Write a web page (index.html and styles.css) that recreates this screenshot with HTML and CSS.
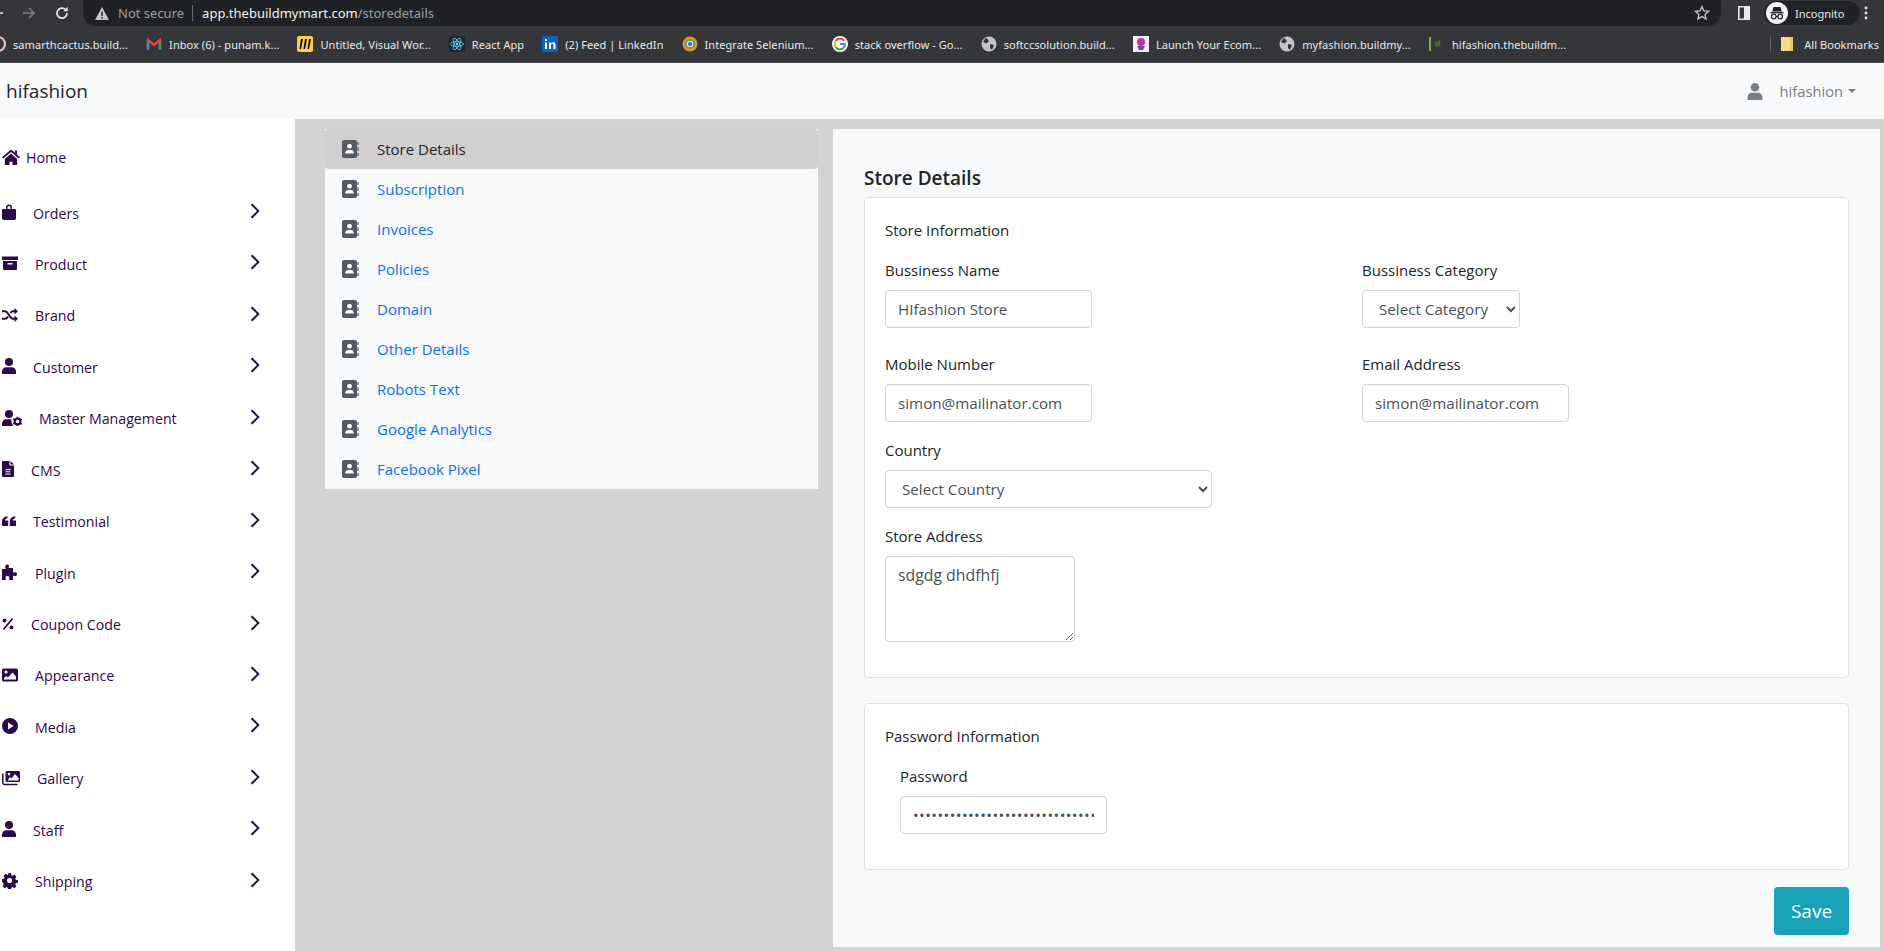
FILE: index.html
```html
<!DOCTYPE html>
<html lang="en">
<head>
  <meta charset="UTF-8" />
  <title>Store Details</title>
  <link rel="stylesheet" href="styles.css">
</head>
<body>
  <svg class="icon-defs" width="0" height="0">
    <symbol id="i-book" viewBox="0 0 17 18">
      <path d="M2 0h11a2 2 0 0 1 2 2v14a2 2 0 0 1-2 2H2a2 2 0 0 1-2-2V2a2 2 0 0 1 2-2z" fill="currentColor"/>
      <circle cx="7.500" cy="6.200" r="2.400" fill="#fff"/>
      <path d="M3.200 13.500c0-2.400 1.400-3.600 2.600-3.600h3.400c1.200 0 2.600 1.200 2.600 3.600z" fill="#fff"/>
      <path d="M16 2v3M16 7v4M16 13v3" stroke="currentColor" stroke-width="1.200"/>
    </symbol>
    <symbol id="i-chev" viewBox="0 0 10 16">
      <path d="M1.500 1.200 8.300 8l-6.800 6.800" fill="none" stroke="currentColor" stroke-width="2"/>
    </symbol>
    <symbol id="i-user" viewBox="0 0 14 16">
      <circle cx="7" cy="4" r="4" fill="currentColor"/>
      <path d="M0 16v-2.200C0 11 2 9.200 4.200 9.200h5.600C12 9.200 14 11 14 13.800V16z" fill="currentColor"/>
    </symbol>
    <symbol id="i-globe" viewBox="0 0 16 16">
      <circle cx="8" cy="8" r="7.500" fill="#c4c7c5"/>
      <path d="M5 1.500 8 5 5.500 7.500 2 6zM9 8l4 1-2 5-2-2z" fill="#35363a"/>
    </symbol>
  </svg>

  <!-- browser toolbar -->
  <header class="browser">
    <div class="tabbar">
      <svg class="nav-arrow back" viewBox="0 0 14 14"><path d="M13 7H2M7 2 2 7l5 5" fill="none" stroke="#e8eaed" stroke-width="1.600"/></svg>
      <svg class="nav-arrow fwd" viewBox="0 0 14 14"><path d="M1 7h11M7 2l5 5-5 5" fill="none" stroke="#7d7f83" stroke-width="1.600"/></svg>
      <svg class="nav-arrow reload" viewBox="0 0 14 14"><path d="M12 7a5 5 0 1 1-1.500-3.500" fill="none" stroke="#e8eaed" stroke-width="1.700"/><path d="M12.800 0.800v4.400H8.400z" fill="#e8eaed"/></svg>
      <div class="urlbar">
        <svg class="warn" viewBox="0 0 14 13"><path d="M7 0l7 13H0z" fill="#c4c7c5"/><path d="M6.300 4.500h1.400v4.500H6.300zM6.300 10h1.400v1.400H6.300z" fill="#202124"/></svg>
        <span class="not-secure">Not secure</span>
        <span class="url-sep"></span>
        <span class="url-host">app.thebuildmymart.com</span><span class="url-path">/storedetails</span>
        <svg class="star" viewBox="0 0 16 16"><path d="M8 1.500l1.900 4.400 4.700.4-3.600 3.100 1.100 4.600L8 11.600 3.900 14l1.100-4.600L1.400 6.300l4.700-.4z" fill="none" stroke="#c4c7c5" stroke-width="1.300"/></svg>
      </div>
      <svg class="sidepanel" viewBox="0 0 12 14"><path d="M.8.800h10.400v12.400H.8z" fill="none" stroke="#e8eaed" stroke-width="1.600"/><path d="M6 1h5v12H6z" fill="#e8eaed"/></svg>
      <div class="incognito">
        <svg class="spy" viewBox="0 0 22 22"><circle cx="11" cy="11" r="11" fill="#f1f3f4"/><path d="M7.500 5h7l1.300 4.500H6.200zM4.500 10h13v1.200h-13z" fill="#202124"/><circle cx="7.800" cy="14.500" r="2.300" fill="none" stroke="#202124" stroke-width="1.200"/><circle cx="14.200" cy="14.500" r="2.300" fill="none" stroke="#202124" stroke-width="1.200"/><path d="M10 14.500h2" stroke="#202124"/></svg>
        <span>Incognito</span>
      </div>
      <svg class="kebab" viewBox="0 0 4 14"><circle cx="2" cy="2" r="1.400" fill="#e8eaed"/><circle cx="2" cy="7" r="1.400" fill="#e8eaed"/><circle cx="2" cy="12" r="1.400" fill="#e8eaed"/></svg>
    </div>
    <div class="bookmarks">
      <a class="bm bm-first"><svg class="bm-icon" viewBox="0 0 16 16"><circle cx="8" cy="8" r="7" fill="none" stroke="#e9c9b5" stroke-width="2"/></svg><span>samarthcactus.build...</span></a>
      <a class="bm"><svg class="bm-icon" viewBox="0 0 16 16"><path d="M2 13.500V4l6 5 6-5v9.500" fill="none" stroke="#ea4335" stroke-width="2.400"/><path d="M2 13.500V5" stroke="#4285f4" stroke-width="2.400"/><path d="M14 13.500V5" stroke="#34a853" stroke-width="2.400"/></svg><span>Inbox (6) - punam.k...</span></a>
      <a class="bm"><svg class="bm-icon" viewBox="0 0 16 16"><rect width="16" height="16" rx="2" fill="#ffd02f"/><path d="M4 3h2L4 13H2.500zM8 3h2L8 13H6.500zM12 3h2l-2 10h-1.500z" fill="#050038"/></svg><span>Untitled, Visual Wor...</span></a>
      <a class="bm"><svg class="bm-icon" viewBox="0 0 16 16"><rect width="16" height="16" rx="2" fill="#20232a"/><g fill="none" stroke="#61dafb" stroke-width=".8"><ellipse cx="8" cy="8" rx="6.500" ry="2.500"/><ellipse cx="8" cy="8" rx="6.500" ry="2.500" transform="rotate(60 8 8)"/><ellipse cx="8" cy="8" rx="6.500" ry="2.500" transform="rotate(120 8 8)"/></g><circle cx="8" cy="8" r="1.300" fill="#61dafb"/></svg><span>React App</span></a>
      <a class="bm"><svg class="bm-icon" viewBox="0 0 16 16"><rect width="16" height="16" rx="2" fill="#0a66c2"/><path d="M3 6.500h2V13H3zM3 3h2v2H3zM7 6.500h2v1c.5-.8 1.300-1.200 2.200-1.200 1.500 0 2.300 1 2.300 2.700v4h-2V9.500c0-.9-.3-1.400-1.100-1.400S9 8.700 9 9.600V13H7z" fill="#fff"/></svg><span>(2) Feed | LinkedIn</span></a>
      <a class="bm"><svg class="bm-icon" viewBox="0 0 16 16"><circle cx="8" cy="8" r="7.500" fill="#e8912d"/><circle cx="8" cy="8" r="5" fill="#5fa04e"/><circle cx="8" cy="8" r="3.300" fill="#cfe3f7"/><circle cx="8" cy="8" r="2" fill="#2a6fbd"/></svg><span>Integrate Selenium...</span></a>
      <a class="bm"><svg class="bm-icon" viewBox="0 0 16 16"><circle cx="8" cy="8" r="8" fill="#fff"/><path d="M12.300 5a5 5 0 0 0-8.700 0" fill="none" stroke="#ea4335" stroke-width="2"/><path d="M3.600 5a5 5 0 0 0 0 6" fill="none" stroke="#fbbc05" stroke-width="2"/><path d="M3.600 11a5 5 0 0 0 7.800 1" fill="none" stroke="#34a853" stroke-width="2"/><path d="M8 8h5c0 1.800-.6 3.100-1.600 4" fill="none" stroke="#4285f4" stroke-width="2"/></svg><span>stack overflow - Go...</span></a>
      <a class="bm"><svg class="bm-icon"><use href="#i-globe"/></svg><span>softccsolution.build...</span></a>
      <a class="bm"><svg class="bm-icon" viewBox="0 0 16 16"><rect width="16" height="16" fill="#f3eef5"/><circle cx="8" cy="6" r="4" fill="#b8359a"/><path d="M4 10h8l-2 4H6z" fill="#7b3fa0"/></svg><span>Launch Your Ecom...</span></a>
      <a class="bm"><svg class="bm-icon"><use href="#i-globe"/></svg><span>myfashion.buildmy...</span></a>
      <a class="bm"><svg class="bm-icon" viewBox="0 0 16 16"><path d="M1 1v14" stroke="#9ed04c" stroke-width="1.500"/><path d="M6 5l1 6 1-5 1 5 1-7 1 6" fill="none" stroke="#4b6b35" stroke-width="1.200"/></svg><span>hifashion.thebuildm...</span></a>
      <div class="bm-all">
        <svg class="bm-icon folder" viewBox="0 0 12 16"><path d="M0 1h12v14H0z" fill="#f7dc8a"/><path d="M9 1h3v14H9z" fill="#e9c95e"/></svg>
        <span>All Bookmarks</span>
      </div>
    </div>
  </header>

  <nav class="topnav">
    <span class="brand">hifashion</span>
    <div class="user-menu">
      <svg class="user-icon"><use href="#i-user"/></svg>
      <span>hifashion</span>
      <i class="caret"></i>
    </div>
  </nav>

  <div class="layout">
    <aside class="sidebar">
      <a class="side-home">
        <svg class="side-icon w18" viewBox="0 0 18 16"><path d="M9 0.500 0 8.200l1.200 1.300L9 3l7.800 6.500L18 8.200l-3-2.600V1.500h-2.200v2.200zM2.800 9.900 9 4.400l6.200 5.500V16h-4.700v-3.200H7.500V16H2.800z" fill="currentColor"/></svg>
        <span>Home</span>
      </a>
      <a class="side-row">
        <svg class="side-icon w14" viewBox="0 0 14 16"><path d="M4 5V3.500a3 3 0 0 1 6 0V5h3a1 1 0 0 1 1 1v8a2 2 0 0 1-2 2H2a2 2 0 0 1-2-2V6a1 1 0 0 1 1-1zm1.500 0h3V3.500a1.500 1.500 0 0 0-3 0z" fill="currentColor"/></svg>
        <span class="side-label">Orders</span><svg class="chev"><use href="#i-chev"/></svg>
      </a>
      <a class="side-row">
        <svg class="side-icon w16" viewBox="0 0 16 16"><path d="M0 1.500h16v3.500H0zM1 6h14v8a1 1 0 0 1-1 1H2a1 1 0 0 1-1-1zm4.500 2v1.500h5V8z" fill="currentColor"/></svg>
        <span class="side-label">Product</span><svg class="chev"><use href="#i-chev"/></svg>
      </a>
      <a class="side-row">
        <svg class="side-icon w16" viewBox="0 0 16 16"><path d="M0 4.200h3c3.500 0 4.500 7.600 8 7.600h2M0 11.800h3c1.300 0 2.200-1 3-2.200M8.400 6c.7-1 1.500-1.800 2.600-1.800h2" fill="none" stroke="currentColor" stroke-width="2"/><path d="M12.500 1 16 4.200l-3.500 3.200zM12.500 8.600 16 11.800 12.500 15z" fill="currentColor"/></svg>
        <span class="side-label">Brand</span><svg class="chev"><use href="#i-chev"/></svg>
      </a>
      <a class="side-row">
        <svg class="side-icon w14"><use href="#i-user"/></svg>
        <span class="side-label">Customer</span><svg class="chev"><use href="#i-chev"/></svg>
      </a>
      <a class="side-row">
        <svg class="side-icon w20" viewBox="0 0 20 16"><circle cx="7" cy="4" r="4" fill="currentColor"/><path d="M0 16v-2.200C0 11 2 9.200 4.200 9.200h5.300c-.5 2.400.3 4.800 1.900 6.800z" fill="currentColor"/><circle cx="15.500" cy="11.500" r="2.900" fill="none" stroke="currentColor" stroke-width="2.200"/><path d="M15.500 6.800v2M15.500 14.200v2M11.300 9l1.700 1M18 13l1.700 1M11.300 14l1.700-1M18 10l1.700-1" stroke="currentColor" stroke-width="1.700"/></svg>
        <span class="side-label">Master Management</span><svg class="chev"><use href="#i-chev"/></svg>
      </a>
      <a class="side-row">
        <svg class="side-icon w12" viewBox="0 0 12 16"><path d="M1 0h6.500v4.500H12V15a1 1 0 0 1-1 1H1a1 1 0 0 1-1-1V1a1 1 0 0 1 1-1zm2.500 8v1h5V8zm0 2.200v1h5v-1zm0 2.200v1h5v-1z" fill="currentColor" fill-rule="evenodd"/><path d="M8.500 0 12 3.500H8.500z" fill="currentColor"/></svg>
        <span class="side-label">CMS</span><svg class="chev"><use href="#i-chev"/></svg>
      </a>
      <a class="side-row">
        <svg class="side-icon w14" viewBox="0 0 14 16"><path d="M0 8.500C0 5.500 2 3.500 5.500 3.200v2C4 5.400 3 6.200 3 7.500h3.200V13H0zM7.800 8.500c0-3 2-5 5.500-5.300v2c-1.500.2-2.500 1-2.500 2.300H14V13H7.800z" fill="currentColor"/></svg>
        <span class="side-label">Testimonial</span><svg class="chev"><use href="#i-chev"/></svg>
      </a>
      <a class="side-row">
        <svg class="side-icon w16" viewBox="0 0 16 16"><path d="M5 0.500c1.800 0 2.500 1.300 1.800 2.600-.3.500-.2 1 .5 1H11v4c0 .7.500.8 1 .5 1.300-.7 3-.2 3 1.600s-1.700 2.300-3 1.600c-.5-.3-1-.2-1 .5V16H7.500c-.7 0-.8-.5-.5-1 .7-1.300.2-3-1.600-3s-2.300 1.700-1.600 3c.3.500.2 1-.5 1H0V5h3c.7 0 .8-.5.500-1C2.700 2.500 3.200 0.500 5 0.500z" fill="currentColor"/></svg>
        <span class="side-label">Plugin</span><svg class="chev"><use href="#i-chev"/></svg>
      </a>
      <a class="side-row">
        <svg class="side-icon w12" viewBox="0 0 12 16"><circle cx="2.500" cy="4.500" r="2" fill="currentColor"/><circle cx="9.500" cy="11.500" r="2" fill="currentColor"/><path d="M10.500 2.500 1.500 13.500" stroke="currentColor" stroke-width="1.800"/></svg>
        <span class="side-label">Coupon Code</span><svg class="chev"><use href="#i-chev"/></svg>
      </a>
      <a class="side-row">
        <svg class="side-icon w16" viewBox="0 0 16 16"><path d="M1.500 1.500h13A1.500 1.500 0 0 1 16 3v10a1.500 1.500 0 0 1-1.500 1.500h-13A1.500 1.500 0 0 1 0 13V3a1.500 1.500 0 0 1 1.500-1.500zM2 12.500h12V9.500L10.500 5.500 6 10.500 4.500 9 2 11zM4 3.500a1.500 1.500 0 1 0 0 3 1.500 1.500 0 0 0 0-3z" fill="currentColor" fill-rule="evenodd"/></svg>
        <span class="side-label">Appearance</span><svg class="chev"><use href="#i-chev"/></svg>
      </a>
      <a class="side-row">
        <svg class="side-icon w16" viewBox="0 0 16 16"><path d="M8 0a8 8 0 1 1 0 16A8 8 0 0 1 8 0zM6 4.500v7l5.500-3.500z" fill="currentColor" fill-rule="evenodd"/></svg>
        <span class="side-label">Media</span><svg class="chev"><use href="#i-chev"/></svg>
      </a>
      <a class="side-row">
        <svg class="side-icon w18" viewBox="0 0 18 16"><path d="M5 1h11.500A1.500 1.500 0 0 1 18 2.500v8a1.500 1.500 0 0 1-1.500 1.500H5a1.500 1.500 0 0 1-1.500-1.500v-8A1.500 1.500 0 0 1 5 1zm.500 9.500h11V8L13 4 9.500 8.500 8 7zM7 2.800a1.300 1.300 0 1 0 0 2.600 1.300 1.300 0 0 0 0-2.600z" fill="currentColor" fill-rule="evenodd"/><path d="M.8 3.500v9.200a1.800 1.800 0 0 0 1.800 1.800h12.900" fill="none" stroke="currentColor" stroke-width="1.500"/></svg>
        <span class="side-label">Gallery</span><svg class="chev"><use href="#i-chev"/></svg>
      </a>
      <a class="side-row">
        <svg class="side-icon w14"><use href="#i-user"/></svg>
        <span class="side-label">Staff</span><svg class="chev"><use href="#i-chev"/></svg>
      </a>
      <a class="side-row">
        <svg class="side-icon w16" viewBox="0 0 16 16"><path d="M6.500 0h3l.5 2.300 1.300.6 2-1.200 2 2.200-1.200 1.900.6 1.300 2.300.5v2.800l-2.300.5-.6 1.300 1.200 2-2 2-2-1.200-1.300.6-.5 2.300h-3l-.5-2.300-1.300-.6-2 1.200-2-2 1.200-2-.6-1.300L0 9.400V6.600l2.300-.5.600-1.300-1.200-2 2-2 2 1.200 1.300-.6zM8 5.300a2.700 2.700 0 1 0 0 5.400 2.700 2.700 0 0 0 0-5.400z" fill="currentColor" fill-rule="evenodd" transform="scale(.94)"/></svg>
        <span class="side-label">Shipping</span><svg class="chev"><use href="#i-chev"/></svg>
      </a>
    </aside>

    <div class="sublist">
      <a class="sub-item active"><svg class="sub-icon"><use href="#i-book"/></svg>Store Details</a>
      <a class="sub-item"><svg class="sub-icon"><use href="#i-book"/></svg>Subscription</a>
      <a class="sub-item"><svg class="sub-icon"><use href="#i-book"/></svg>Invoices</a>
      <a class="sub-item"><svg class="sub-icon"><use href="#i-book"/></svg>Policies</a>
      <a class="sub-item"><svg class="sub-icon"><use href="#i-book"/></svg>Domain</a>
      <a class="sub-item"><svg class="sub-icon"><use href="#i-book"/></svg>Other Details</a>
      <a class="sub-item"><svg class="sub-icon"><use href="#i-book"/></svg>Robots Text</a>
      <a class="sub-item"><svg class="sub-icon"><use href="#i-book"/></svg>Google Analytics</a>
      <a class="sub-item"><svg class="sub-icon"><use href="#i-book"/></svg>Facebook Pixel</a>
    </div>

    <main class="panel">
      <h1 class="panel-title">Store Details</h1>
      <section class="card">
        <h2 class="card-title">Store Information</h2>
        <div class="form-grid">
          <div class="field tall">
            <label>Bussiness Name</label>
            <input class="ctl" type="text" value="HIfashion Store" />
          </div>
          <div class="field tall">
            <label>Bussiness Category</label>
            <select class="ctl ctl-category"><option>Select Category</option></select>
          </div>
          <div class="field">
            <label>Mobile Number</label>
            <input class="ctl" type="text" value="simon@mailinator.com" />
          </div>
          <div class="field">
            <label>Email Address</label>
            <input class="ctl" type="text" value="simon@mailinator.com" />
          </div>
          <div class="field wide">
            <label>Country</label>
            <select class="ctl ctl-country"><option>Select Country</option></select>
          </div>
          <div class="field wide last">
            <label>Store Address</label>
            <textarea class="ctl ctl-area">sdgdg dhdfhfj</textarea>
          </div>
        </div>
      </section>
      <section class="card card-pass">
        <h2 class="card-title">Password Information</h2>
        <div class="field last indent">
          <label>Password</label>
          <input class="ctl ctl-pass" type="password" value="simon@mailinator.com1234567890" />
        </div>
      </section>
      <div class="actions">
        <button class="save-btn" type="button">Save</button>
      </div>
    </main>
  </div>
</body>
</html>
```

FILE: styles.css
```css
* {
  box-sizing: border-box;
}

html,
body {
  margin: 0;
  height: 951px;
  overflow: hidden;
}

body {
  font-family: "Open Sans", "Noto Sans", sans-serif;
  font-size: 15px;
  color: #212529;
  background: #d3d3d3;
}

.icon-defs {
  position: absolute;
}

/* browser toolbar */
.browser {
  height: 63px;
  background: #35363a;
  border-bottom: 1px solid #4a4b4e;
  overflow: hidden;
}

.tabbar {
  display: flex;
  align-items: center;
  height: 26px;
}

.nav-arrow {
  flex: none;
  width: 14px;
  height: 14px;
}

.nav-arrow.back {
  margin-left: -10px;
}

.nav-arrow.fwd {
  margin-left: 18px;
}

.nav-arrow.reload {
  margin-left: 19px;
}

.urlbar {
  display: flex;
  align-items: center;
  flex: none;
  width: 1638px;
  height: 26px;
  margin-left: 14px;
  padding: 0 11px 0 12px;
  background: #202124;
  border-radius: 0 0 13px 13px;
  font-family: "Noto Sans", sans-serif;
  font-size: 13px;
}

.warn {
  width: 14px;
  height: 13px;
  margin-right: 9px;
}

.not-secure,
.url-path {
  color: #9aa0a6;
}

.url-sep {
  width: 1px;
  height: 16px;
  margin: 0 9px 0 8px;
  background: #6b6d70;
}

.url-host {
  color: #f1f3f4;
}

.star {
  width: 16px;
  height: 16px;
  margin-left: auto;
}

.sidepanel {
  flex: none;
  width: 12px;
  height: 14px;
  margin-left: 17px;
}

.incognito {
  display: flex;
  align-items: center;
  flex: none;
  gap: 7px;
  width: 96px;
  height: 24px;
  margin-left: 14px;
  padding-left: 2px;
  background: #202124;
  border-radius: 12px;
  color: #e8eaed;
  font-family: "Noto Sans", sans-serif;
  font-size: 11px;
}

.spy {
  width: 22px;
  height: 22px;
}

.kebab {
  flex: none;
  width: 4px;
  height: 14px;
  margin-left: 4px;
}

.bookmarks {
  display: flex;
  align-items: center;
  gap: 18px;
  height: 36px;
  margin-left: -10px;
  color: #e8eaed;
  font-family: "Noto Sans", sans-serif;
  font-size: 11px;
  letter-spacing: .06px;
}

.bm {
  display: flex;
  align-items: center;
  gap: 7px;
  white-space: nowrap;
}

.bm-icon {
  flex: none;
  width: 16px;
  height: 16px;
}

.bm-all {
  display: flex;
  align-items: center;
  gap: 11px;
  margin-left: auto;
  margin-right: 5px;
  padding-left: 10px;
  border-left: 1px solid #5f6368;
}

.folder {
  width: 12px;
}

/* app navbar */
.topnav {
  display: flex;
  align-items: center;
  justify-content: space-between;
  height: 56px;
  padding: 0 28px 0 6px;
  background: #f8f9fa;
}

.brand {
  font-size: 19px;
  color: #212529;
}

.user-menu {
  display: flex;
  align-items: center;
  color: #7a7f85;
  font-size: 14.700px;
}

.user-icon {
  width: 16px;
  height: 17px;
  margin-right: 17px;
}

.caret {
  width: 0;
  height: 0;
  margin-left: 5px;
  border-top: 4px solid currentColor;
  border-left: 4px solid transparent;
  border-right: 4px solid transparent;
}

/* page layout */
.layout {
  display: flex;
  height: 832px;
  align-items: flex-start;
}

.sidebar {
  flex: none;
  width: 295px;
  height: 832px;
  padding: 30px 0 0 2px;
  background: #fff;
  color: #2c0a4a;
  font-size: 14.200px;
}

.side-home {
  display: flex;
  align-items: center;
  gap: 6px;
  height: 16px;
  margin-bottom: 39px;
}

.side-row {
  display: flex;
  align-items: flex-start;
  height: 51.450px;
}

.side-icon {
  flex: none;
  width: 14px;
  height: 16px;
  margin-right: 17px;
}

.side-home .side-icon {
  margin-right: 0;
}

.w12 {
  width: 12px;
}

.w16 {
  width: 16px;
}

.w18 {
  width: 18px;
}

.w20 {
  width: 20px;
}

.side-label {
  margin-top: -1.500px;
  line-height: 22px;
}

.chev {
  flex: none;
  width: 10px;
  height: 16px;
  margin-top: -1px;
  margin-left: auto;
  margin-right: 35px;
  color: #1d1640;
}

/* settings menu */
.sublist {
  flex: none;
  width: 493px;
  margin: 10px 0 0 30px;
  background: #f8f9fa;
}

.sub-item {
  display: flex;
  align-items: center;
  height: 40px;
  padding-left: 17px;
  color: #0d6efd;
}

.sub-item.active {
  background: #d1cfcf;
  border-radius: 4px;
  color: #212529;
}

.sub-icon {
  flex: none;
  width: 17px;
  height: 18px;
  margin-right: 18px;
  color: #565b63;
}

/* form panel */
.panel {
  flex: none;
  width: 1047px;
  height: 818px;
  margin: 10px 0 0 15px;
  padding: 37px 31px 0;
  background: #f8f9fa;
}

.panel-title {
  margin: 0 0 7px;
  font-size: 19px;
  font-weight: 600;
  line-height: 24px;
  color: #212529;
}

.card {
  padding: 21px 20px 35px;
  background: #fff;
  border: 1px solid #dfe1e3;
  border-radius: 4px;
}

.card-pass {
  margin-top: 25px;
}

.card-title {
  margin: 0 0 18px;
  font-size: 15px;
  font-weight: 400;
  line-height: 22px;
}

.form-grid {
  display: grid;
  grid-template-columns: 477px 1fr;
}

.field {
  margin-bottom: 17px;
}

.field.tall {
  margin-bottom: 25px;
}

.field.wide {
  grid-column: 1 / -1;
}

.field.last {
  margin-bottom: 0;
}

.field.indent {
  margin-left: 15px;
}

.field label {
  display: block;
  margin-bottom: 9px;
  line-height: 22px;
}

.ctl {
  display: block;
  width: 207px;
  height: 38px;
  padding: 0 12px;
  background: #fff;
  border: 1px solid #ced4da;
  border-radius: 4px;
  color: #495057;
  font-family: inherit;
  font-size: 15.200px;
}

.ctl-category {
  width: 158px;
}

.ctl-country {
  width: 327px;
}

.ctl-area {
  width: 190px;
  height: 86px;
  padding: 7px 12px;
  font-size: 15.800px;
}

.ctl-pass {
  letter-spacing: .4px;
}

.actions {
  display: flex;
  justify-content: flex-end;
  margin-top: 17px;
}

.save-btn {
  width: 75px;
  height: 48px;
  background: #17a2b8;
  border: 0;
  border-radius: 4px;
  color: #fff;
  font-family: inherit;
  font-size: 19px;
}
```
